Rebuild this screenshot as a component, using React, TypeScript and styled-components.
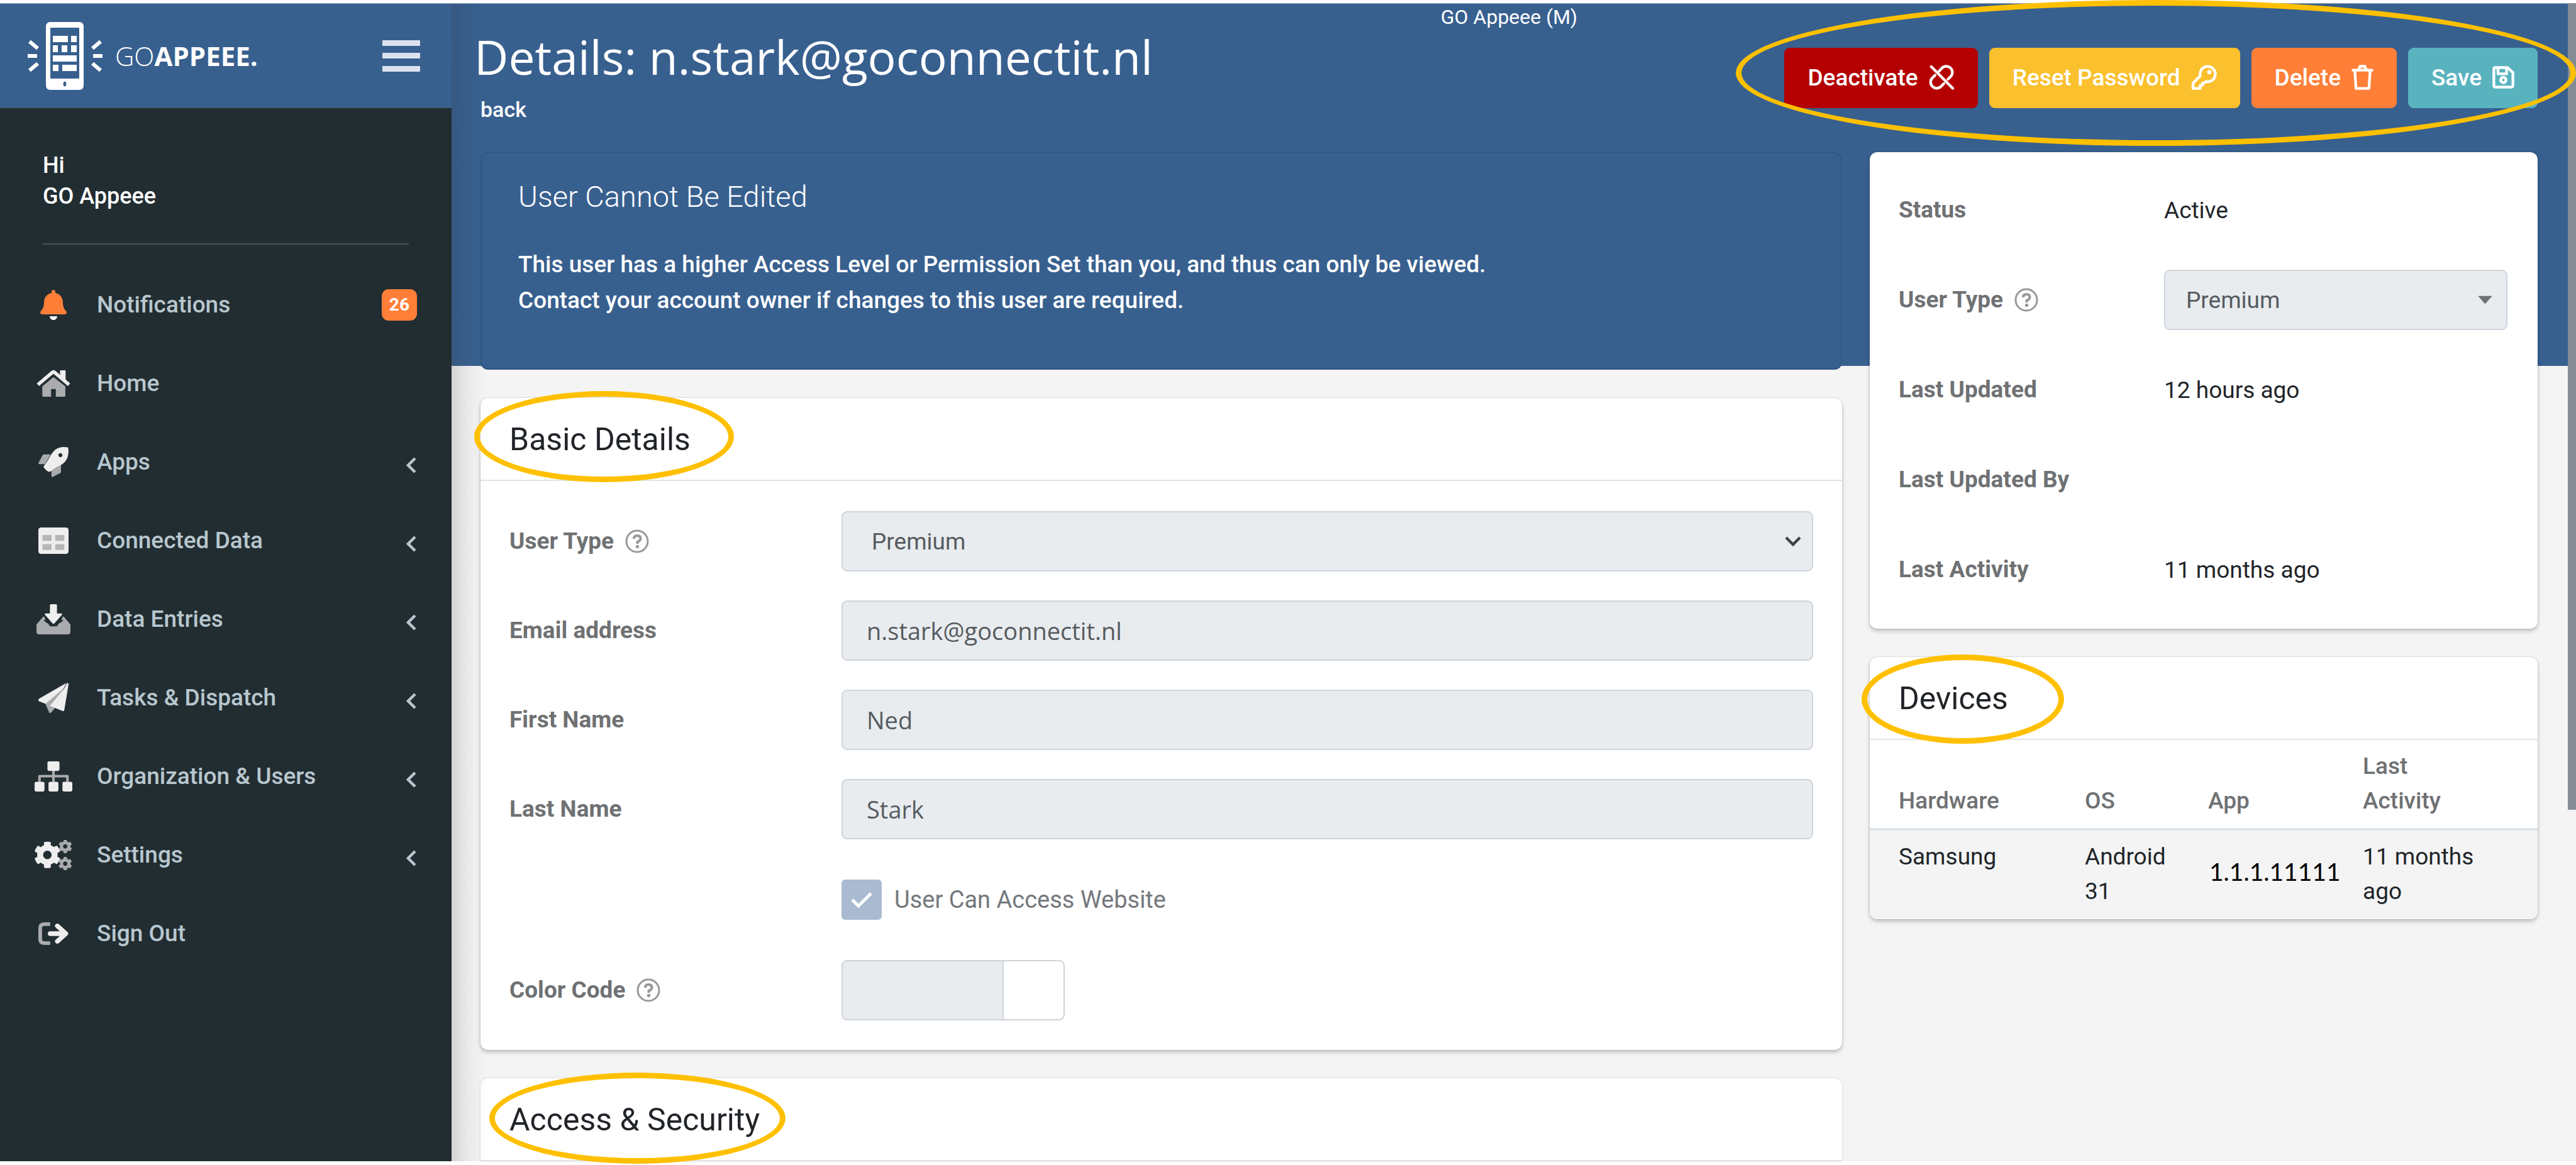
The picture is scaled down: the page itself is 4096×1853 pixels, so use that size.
import React from "react";
import styled, { createGlobalStyle } from "styled-components";
import { FaCog } from "react-icons/fa";

const color = {
  blue: "#38608f",
  dark: "#222d32",
  page: "#f4f4f4",
  navText: "#b8c7ce",
  label: "#6f7173",
  text: "#212529",
  field: "#e8ecef",
  fieldBorder: "#ced4da",
  fieldText: "#565b60",
  line: "#e3e3e3",
  ring: "#ffc000",
};

const GlobalStyle = createGlobalStyle`
  *, *::before, *::after { box-sizing: border-box; }
  html, body { margin: 0; background: #fff; }
  body { font-family: Roboto, "Liberation Sans", sans-serif; font-size: 37px; color: ${color.text}; overflow: hidden; }
  h1, h2, h3, p { margin: 0; font-weight: 400; }
  button, input, select { font: inherit; margin: 0; }
`;

const Shell = styled.div`
  display: grid;
  grid-template-columns: 718px minmax(0, 1fr) 13px;
  min-height: 100vh;
  padding: 5px 0 6px;
  background: #fff;
`;

/* ---------- sidebar ---------- */

const Sidebar = styled.aside`
  background: ${color.dark};
`;

const Brand = styled.div`
  display: flex;
  align-items: center;
  justify-content: space-between;
  height: 167px;
  padding: 0 50px 0 44px;
  background: ${color.blue};
  border-top: 1px solid #8b9fb8;
  border-bottom: 1px solid #4b5a60;
`;

const BrandLink = styled.a`
  display: flex;
  align-items: center;
  gap: 20px;
  color: #fff;
  text-decoration: none;
`;

const BrandName = styled.span`
  font: 300 42px/60px "Open Sans", sans-serif;
  b { font-weight: 700; }
`;

const MenuButton = styled.button`
  display: flex;
  flex-direction: column;
  justify-content: space-between;
  width: 60px;
  height: 50px;
  padding: 0;
  border: 0;
  background: none;
  span { height: 9px; background: #dbe2ee; border-radius: 1px; }
`;

const Greeting = styled.div`
  margin: 0 68px;
  padding: 67px 0 50px;
  border-bottom: 2px solid #4a555c;
  color: #fff;
  font-size: 36px;
  font-weight: 500;
  line-height: 49px;
`;

const Nav = styled.nav`
  padding-top: 33px;
`;

const NavLink = styled.a`
  display: flex;
  align-items: center;
  height: 125px;
  padding: 0 55px 0 50px;
  color: ${color.navText};
  font-weight: 500;
  text-decoration: none;
`;

const NavIcon = styled.span`
  display: flex;
  justify-content: center;
  width: 70px;
  margin-right: 34px;
  > svg { display: block; height: 48px; }
`;

const NavLabel = styled.span`
  flex: 1;
`;

const Badge = styled.span`
  padding: 0 12px;
  border-radius: 11px;
  background: #ff7f38;
  color: #fff;
  font-size: 28px;
  font-weight: 700;
  line-height: 50px;
`;

const NavChevron = styled.svg`
  width: 18px;
  height: 26px;
  margin-top: 10px;
`;

/* ---------- main ---------- */

const Main = styled.main`
  position: relative;
  background: linear-gradient(${color.blue} 576px, ${color.page} 576px);
  border-top: 1px solid #8b9fb8;
  padding: 0 48px 0 36px;

  &::after {
    content: "";
    position: absolute;
    inset: 0 auto 0 0;
    width: 56px;
    background: linear-gradient(to right, rgba(50, 50, 60, 0.17), rgba(50, 50, 60, 0.05) 45%, rgba(50, 50, 60, 0));
    pointer-events: none;
  }
`;

const Tenant = styled.div`
  padding-left: 10px;
  color: #fff;
  font-size: 32px;
  line-height: 42px;
  text-align: center;
`;

const PageHeader = styled.header`
  display: flex;
  justify-content: space-between;
  align-items: flex-start;
  height: 194px;
  color: #fff;
`;

const PageTitle = styled.h1`
  font: 400 75px/84px "Open Sans", sans-serif;
`;

const BackLink = styled.a`
  display: inline-block;
  margin-top: 20px;
  padding: 0 10px;
  color: #fff;
  font-size: 34px;
  font-weight: 500;
  line-height: 44px;
  text-decoration: none;
`;

const Actions = styled.div`
  position: relative;
  display: flex;
  gap: 18px;
  margin-top: 28px;
`;

const ActionButton = styled.button<{ $bg: string }>`
  display: flex;
  align-items: center;
  gap: 17px;
  height: 96px;
  padding: 0 37px 2px;
  border: 0;
  border-radius: 9px;
  background: ${(p) => p.$bg};
  color: #fff;
  font-weight: 500;
  svg { display: block; height: 40px; fill: none; stroke: #fff; stroke-width: 2.6; stroke-linecap: round; stroke-linejoin: round; }
`;

/* Ring laid over the part it calls out. */
const Ring = styled.span<{ $inset: string }>`
  position: absolute;
  inset: ${(p) => p.$inset};
  border: 9px solid ${color.ring};
  border-radius: 50%;
  pointer-events: none;
  z-index: 2;
`;

const Columns = styled.div`
  display: grid;
  grid-template-columns: minmax(0, 2165fr) minmax(0, 1062fr);
  gap: 44px;
  padding-left: 10px;
`;

const Stack = styled.div`
  display: flex;
  flex-direction: column;
  gap: 45px;
`;

const Alert = styled.section`
  padding: 42px 58px 80px;
  border: 2px solid #33567f;
  border-radius: 12px;
  background: ${color.blue};
  color: #fff;
  h2 { margin-bottom: 52px; font-size: 47px; font-weight: 300; line-height: 54px; }
  p { font-weight: 500; line-height: 57px; }
`;

const Card = styled.section<{ $cut?: boolean }>`
  background: #fff;
  border-radius: ${(p) => (p.$cut ? "12px 12px 0 0" : "12px")};
  box-shadow: 0 0 3px rgba(0, 0, 0, 0.18)${(p) => (p.$cut ? "" : ", 0 4px 6px rgba(0, 0, 0, 0.2)")};
`;

const CardHeader = styled.header`
  padding: 36px 46px 34px;
  border-bottom: 2px solid ${color.line};
  h2 { position: relative; width: fit-content; font-size: 50px; line-height: 60px; }
`;

const Rows = styled.div<{ $label: string; $gap: string; $pad: string }>`
  display: grid;
  grid-template-columns: ${(p) => p.$label} minmax(0, 1fr);
  grid-auto-rows: minmax(96px, auto);
  row-gap: ${(p) => p.$gap};
  align-items: center;
  padding: ${(p) => p.$pad};
`;

const Label = styled.label`
  display: flex;
  align-items: center;
  gap: 18px;
  color: ${color.label};
  font-weight: 700;
  line-height: 48px;
  svg { display: block; }
`;

const Field = styled.input`
  width: 100%;
  height: 96px;
  padding: 0 38px;
  border: 2px solid ${color.fieldBorder};
  border-radius: 9px;
  background: ${color.field};
  color: ${color.fieldText};
  font-family: "Open Sans", sans-serif;
  font-size: 38px;
`;

const SelectWrap = styled.div<{ $icon: string }>`
  position: relative;
  svg { position: absolute; top: 50%; right: ${(p) => p.$icon}; transform: translateY(-50%); pointer-events: none; }
`;

const Select = styled.select<{ $pad: string }>`
  appearance: none;
  display: block;
  width: 100%;
  height: 96px;
  padding: 0 ${(p) => p.$pad};
  border: 2px solid ${color.fieldBorder};
  border-radius: 9px;
  background: ${color.field};
  color: ${color.fieldText};
  opacity: 1;
`;

const CheckLabel = styled.label`
  grid-column: 2;
  display: flex;
  align-items: center;
  gap: 20px;
  height: 100px;
  color: #73787d;
  font-size: 38px;
`;

const CheckBox = styled.input`
  appearance: none;
  width: 64px;
  height: 64px;
  border-radius: 6px;
  background: #a9bad1;
`;

const CheckWrap = styled.span`
  position: relative;
  display: flex;
  svg { position: absolute; inset: 0; }
`;

const ColorInput = styled.div`
  display: grid;
  grid-template-columns: 258px 97px;
  height: 96px;
  input, span { width: 100%; height: 100%; border: 2px solid ${color.fieldBorder}; }
  input { border-radius: 9px 0 0 9px; background: ${color.field}; padding: 0 38px; }
  span { border-left: 0; border-radius: 0 9px 9px 0; background: #fff; }
`;

const DeviceTable = styled.table`
  width: 100%;
  table-layout: fixed;
  border-collapse: collapse;
  text-align: left;
  line-height: 55px;
  th, td { padding: 0 30px 0 0; }
  th:first-child, td:first-child { padding-left: 46px; width: 342px; }
  th:nth-child(2) { width: 196px; }
  th:nth-child(3) { width: 246px; }
  th:last-child, td:last-child { padding-right: 60px; }
  th { padding-top: 14px; padding-bottom: 16px; vertical-align: bottom; color: ${color.label}; font-weight: 500; }
  thead { border-bottom: 4px solid #dde2e7; }
  td { padding-top: 14px; padding-bottom: 17px; vertical-align: top; background: ${color.page}; }
  td:first-child { border-bottom-left-radius: 12px; }
  td:last-child { border-bottom-right-radius: 12px; }
  td.version { padding: 10px 0 20px 2px; vertical-align: middle; color: #000; font-family: Lato, sans-serif; font-size: 39px; }
`;

const ScrollTrack = styled.div`
  background: ${color.page};
  &::before { content: ""; display: block; height: 1283px; background: #868c95; }
`;

/* ---------- drawings ---------- */

const lite = "#eeeeee";
const dim = "#a9abad";

const PhoneLogo = () => (
  <svg width="119" height="108" viewBox="0 0 119 108" aria-hidden="true">
    <path
      fill="#fff"
      fillRule="evenodd"
      d="M36 0H82Q89 0 89 8V100Q89 108 82 108H36Q29 108 29 100V8Q29 0 36 0ZM37 9Q36 9 36 10V89Q36 90 37 90H81Q82 90 82 89V10Q82 9 81 9ZM59 94.500A2.500 4 0 1 0 59.010 94.500Z"
    />
    <g fill="#fff">
      <path d="M40 22h24v10H40zM69 22h9v10h-9zM40 37h8v11h-8zM54 37h9v11h-9zM69 37h9v11h-9zM40 53h38v10H40zM40 68h9v10h-9zM55 68h23v10H55z" />
    </g>
    <path stroke="#fff" strokeWidth="6" d="M3 31l13 11M0 54h15M3 77l13-11M116 31l-13 11M119 54h-15M116 77l-13-11" />
  </svg>
);

const navIcons: Record<string, React.ReactNode> = {
  bell: (
    <svg viewBox="0 0 448 512">
      <path fill="#fff" d="M224 512c35.320 0 63.970-28.650 63.970-64H160.030c0 35.350 28.650 64 63.970 64z" />
      <path
        fill="#ff7f38"
        d="M439.390 362.290c-19.320-20.760-55.470-51.990-55.470-154.290 0-77.700-54.480-139.900-127.940-155.160V32c0-17.670-14.320-32-31.980-32s-31.980 14.330-31.980 32v20.840C118.560 68.100 64.080 130.300 64.080 208c0 102.300-36.150 133.530-55.470 154.290-6 6.450-8.660 14.160-8.610 21.710.110 16.400 12.980 32 32.100 32h383.800c19.120 0 32-15.600 32.100-32 .050-7.550-2.610-15.270-8.610-21.710z"
      />
    </svg>
  ),
  home: (
    <svg viewBox="0 0 576 512">
      <path fill={dim} d="M288 146L99 304V460q0 20 20 20H248V360q0-12 12-12h56q12 0 12 12V480H470q20 0 20-20V304Z" />
      <path fill={lite} d="M400 40q0-8 8-8h78q8 0 8 8V214L400 134Z" />
      <path fill="none" stroke={lite} strokeWidth="58" strokeLinejoin="round" d="M24 276L272 66Q288 54 304 66L552 276" />
    </svg>
  ),
  rocket: (
    <svg viewBox="0 0 512 512">
      <path fill={dim} d="M96 126H210L110 290H14Q-4 290 2 272L70 142Q78 126 96 126ZM384 310V416Q384 434 370 442L240 510Q222 514 222 496V400Z" />
      <path
        fill={lite}
        fillRule="evenodd"
        d="M505 14Q504 8 496 6C430-6 336-2 270 62C200 134 190 200 92 326Q86 336 92 346C116 380 150 412 184 422Q192 424 200 418C320 330 440 300 484 200C516 130 514 62 505 14ZM374 104A34 34 0 1 1 373.900 104Z"
      />
    </svg>
  ),
  table: (
    <svg viewBox="0 0 512 512">
      <rect y="32" width="512" height="448" rx="44" fill={lite} />
      <path fill="#b4b5b7" d="M70 160h154v98H70zM286 160h154v98H286zM70 314h154v98H70zM286 314h154v98H286z" />
    </svg>
  ),
  inbox: (
    <svg viewBox="0 0 576 512">
      <path
        fill={dim}
        d="M132 208Q112 208 102 224L8 336Q0 346 0 360V470Q0 512 42 512H534Q576 512 576 470V360Q576 346 568 336L474 224Q464 208 444 208L424 268H462L400 320H386L346 376H230L190 320H176L114 268H152Z"
      />
      <path fill={lite} d="M228 20Q228 0 248 0H328Q348 0 348 20V158H420Q446 160 430 182L304 326Q288 340 272 326L146 182Q130 160 156 158H228Z" />
    </svg>
  ),
  plane: (
    <svg viewBox="0 0 512 512">
      <path fill={dim} d="M110 340L440 70L282 426L218.500 503C204.500 520 176 511 176 487.500L121 358Z" />
      <path fill={lite} d="M476 3.200L12.500 270.600c-18.100 10.400-15.800 35.600 2.200 43.200L121 358.400L430 92z" />
      <path fill={lite} d="M512 26L440 460.200c-2.600 15.300-18.800 24.200-33 18.200L196 392L434 104L488 2C500 2 514 12 512 26z" />
    </svg>
  ),
  sitemap: (
    <svg viewBox="0 0 640 512">
      <path fill="none" stroke={dim} strokeWidth="44" strokeLinejoin="round" d="M320 150V350M83 350V250H557V350" />
      <g fill={lite}>
        <rect x="218" y="0" width="204" height="162" rx="26" />
        <rect x="0" y="346" width="168" height="166" rx="26" />
        <rect x="236" y="346" width="168" height="166" rx="26" />
        <rect x="472" y="346" width="168" height="166" rx="26" />
      </g>
    </svg>
  ),
  cogs: (
    <svg viewBox="0 0 640 512">
      <FaCog x={-14} y={22} size={462} color={lite} />
      <FaCog x={402} y={-8} size={236} color={dim} />
      <FaCog x={402} y={284} size={236} color={dim} />
    </svg>
  ),
  out: (
    <svg viewBox="0 0 512 512">
      <path fill="none" stroke={dim} strokeWidth="62" d="M200 95H110Q31 95 31 160V352Q31 417 110 417H200" />
      <path fill="none" stroke={lite} strokeWidth="78" strokeLinecap="round" strokeLinejoin="round" d="M200 256H440M322 126L466 256L322 386" />
    </svg>
  ),
};

const HelpIcon = () => (
  <svg width="38" height="38" viewBox="0 0 38 38" aria-hidden="true" fill="none" stroke="#96989a" strokeWidth="3">
    <circle cx="19" cy="19" r="17" />
    <path strokeWidth="4" d="M14 15Q14 10 19 10Q24.500 10 24.500 14.500Q24.500 18 19.500 20V23" />
    <circle cx="19.500" cy="27.500" r="1.200" fill="#96989a" />
  </svg>
);

const UnlinkIcon = () => (
  <svg width="41" viewBox="0 0 24 24">
    <path d="M2 1.800L22.500 22.500M9.600 6L11.800 3.600A5.700 5.700 0 0 1 20.800 11L18 13.800M5.600 10L3.200 12.400A5.700 5.700 0 0 0 11.200 20.800L14 18" />
  </svg>
);

const KeyIcon = () => (
  <svg width="41" viewBox="0 0 24 24">
    <path d="M8.400 10.600A7.300 7.300 0 1 1 13.800 16L12.500 17.400H10.600V19.600H8.400V22.600H1.500V17.600Z" />
    <circle cx="17" cy="7" r="1.300" fill="#fff" stroke="#fff" strokeWidth="1.400" />
  </svg>
);

const TrashIcon = () => (
  <svg width="35" viewBox="0 0 21 24">
    <path d="M1.400 5.200H19.600M3.200 5.200L4.300 22.600H16.700L17.800 5.200M6.600 5.200L8.200 1.500H12.800L14.400 5.200" />
  </svg>
);

const SaveIcon = () => (
  <svg width="35" viewBox="0 0 21 24">
    <path d="M3 2.700H14.500L19.600 7.400V19.800Q19.600 21.300 18 21.300H3Q1.400 21.300 1.400 19.800V4.200Q1.400 2.700 3 2.700ZM5.400 3V8.600H13.600V3" />
    <circle cx="10.500" cy="14.500" r="2.500" />
  </svg>
);

/* ---------- page ---------- */

const navItems = [
  { icon: "bell", label: "Notifications", badge: "26" },
  { icon: "home", label: "Home" },
  { icon: "rocket", label: "Apps", open: true },
  { icon: "table", label: "Connected Data", open: true },
  { icon: "inbox", label: "Data Entries", open: true },
  { icon: "plane", label: "Tasks & Dispatch", open: true },
  { icon: "sitemap", label: "Organization & Users", open: true },
  { icon: "cogs", label: "Settings", open: true },
  { icon: "out", label: "Sign Out" },
];

export default function App() {
  return (
    <>
      <GlobalStyle />
      <Shell>
        <Sidebar>
          <Brand>
            <BrandLink href="#">
              <PhoneLogo />
              <BrandName>
                GO<b>APPEEE.</b>
              </BrandName>
            </BrandLink>
            <MenuButton type="button" aria-label="Toggle menu">
              <span />
              <span />
              <span />
            </MenuButton>
          </Brand>
          <Greeting>
            <div>Hi</div>
            <div>GO Appeee</div>
          </Greeting>
          <Nav>
            {navItems.map((item) => (
              <NavLink key={item.label} href="#">
                <NavIcon>{navIcons[item.icon]}</NavIcon>
                <NavLabel>{item.label}</NavLabel>
                {item.badge && <Badge>{item.badge}</Badge>}
                {item.open && (
                  <NavChevron viewBox="0 0 18 26">
                    <path d="M15 2L4 13l11 11" fill="none" stroke={color.navText} strokeWidth="4.500" />
                  </NavChevron>
                )}
              </NavLink>
            ))}
          </Nav>
        </Sidebar>

        <Main>
          <Tenant>GO Appeee (M)</Tenant>
          <PageHeader>
            <div>
              <PageTitle>Details: n.stark@goconnectit.nl</PageTitle>
              <BackLink href="#">back</BackLink>
            </div>
            <Actions>
              <ActionButton type="button" $bg="#b40000">
                Deactivate <UnlinkIcon />
              </ActionButton>
              <ActionButton type="button" $bg="#fbc02d">
                Reset Password <KeyIcon />
              </ActionButton>
              <ActionButton type="button" $bg="#ff7f38">
                Delete <TrashIcon />
              </ActionButton>
              <ActionButton type="button" $bg="#59b3bf">
                Save <SaveIcon />
              </ActionButton>
              <Ring $inset="-76px -61px -60px -77px" />
            </Actions>
          </PageHeader>

          <Columns>
            <Stack>
              <Alert>
                <h2>User Cannot Be Edited</h2>
                <p>This user has a higher Access Level or Permission Set than you, and thus can only be viewed.</p>
                <p>Contact your account owner if changes to this user are required.</p>
              </Alert>

              <Card>
                <CardHeader>
                  <h2>
                    Basic Details
                    <Ring $inset="-47px -69px -38px -56px" />
                  </h2>
                </CardHeader>
                <Rows $label="528px" $gap="46px" $pad="48px 46px 47px">
                  <Label htmlFor="type">
                    User Type <HelpIcon />
                  </Label>
                  <SelectWrap $icon="18px">
                    <Select id="type" $pad="46px" disabled>
                      <option>Premium</option>
                    </Select>
                    <svg width="28" height="18" viewBox="0 0 28 18">
                      <path d="M3 3l11 11L25 3" fill="none" stroke="#3f4448" strokeWidth="4.500" />
                    </svg>
                  </SelectWrap>
                  <Label htmlFor="email">Email address</Label>
                  <Field id="email" defaultValue="n.stark@goconnectit.nl" disabled />
                  <Label htmlFor="first">First Name</Label>
                  <Field id="first" defaultValue="Ned" disabled />
                  <Label htmlFor="last">Last Name</Label>
                  <Field id="last" defaultValue="Stark" disabled />
                  <CheckLabel>
                    <CheckWrap>
                      <CheckBox type="checkbox" defaultChecked disabled />
                      <svg viewBox="0 0 64 64">
                        <path d="M17 32l10 10 20-20" fill="none" stroke="#fff" strokeWidth="5" />
                      </svg>
                    </CheckWrap>
                    User Can Access Website
                  </CheckLabel>
                  <Label htmlFor="color">
                    Color Code <HelpIcon />
                  </Label>
                  <ColorInput>
                    <input id="color" disabled />
                    <span />
                  </ColorInput>
                </Rows>
              </Card>

              <Card $cut>
                <CardHeader>
                  <h2>
                    Access &amp; Security
                    <Ring $inset="-45px -41px -40px -32px" />
                  </h2>
                </CardHeader>
              </Card>
            </Stack>

            <Stack>
              <Card>
                <Rows $label="422px" $gap="47px" $pad="44px 48px 46px 46px">
                  <Label as="span">Status</Label>
                  <span>Active</span>
                  <Label htmlFor="side-type">
                    User Type <HelpIcon />
                  </Label>
                  <SelectWrap $icon="24px">
                    <Select id="side-type" $pad="33px" disabled>
                      <option>Premium</option>
                    </Select>
                    <svg width="23" height="13" viewBox="0 0 23 13">
                      <path d="M0 0h23L11.500 13z" fill="#6f7173" />
                    </svg>
                  </SelectWrap>
                  <Label as="span">Last Updated</Label>
                  <span>12 hours ago</span>
                  <Label as="span">Last Updated By</Label>
                  <span />
                  <Label as="span">Last Activity</Label>
                  <span>11 months ago</span>
                </Rows>
              </Card>

              <Card>
                <CardHeader>
                  <h2>
                    Devices
                    <Ring $inset="-40px -89px -42px -59px" />
                  </h2>
                </CardHeader>
                <DeviceTable>
                  <thead>
                    <tr>
                      <th>Hardware</th>
                      <th>OS</th>
                      <th>App</th>
                      <th>
                        Last
                        <br />
                        Activity
                      </th>
                    </tr>
                  </thead>
                  <tbody>
                    <tr>
                      <td>Samsung</td>
                      <td>Android 31</td>
                      <td className="version">1.1.1.11111</td>
                      <td>11 months ago</td>
                    </tr>
                  </tbody>
                </DeviceTable>
              </Card>
            </Stack>
          </Columns>
        </Main>

        <ScrollTrack />
      </Shell>
    </>
  );
}
